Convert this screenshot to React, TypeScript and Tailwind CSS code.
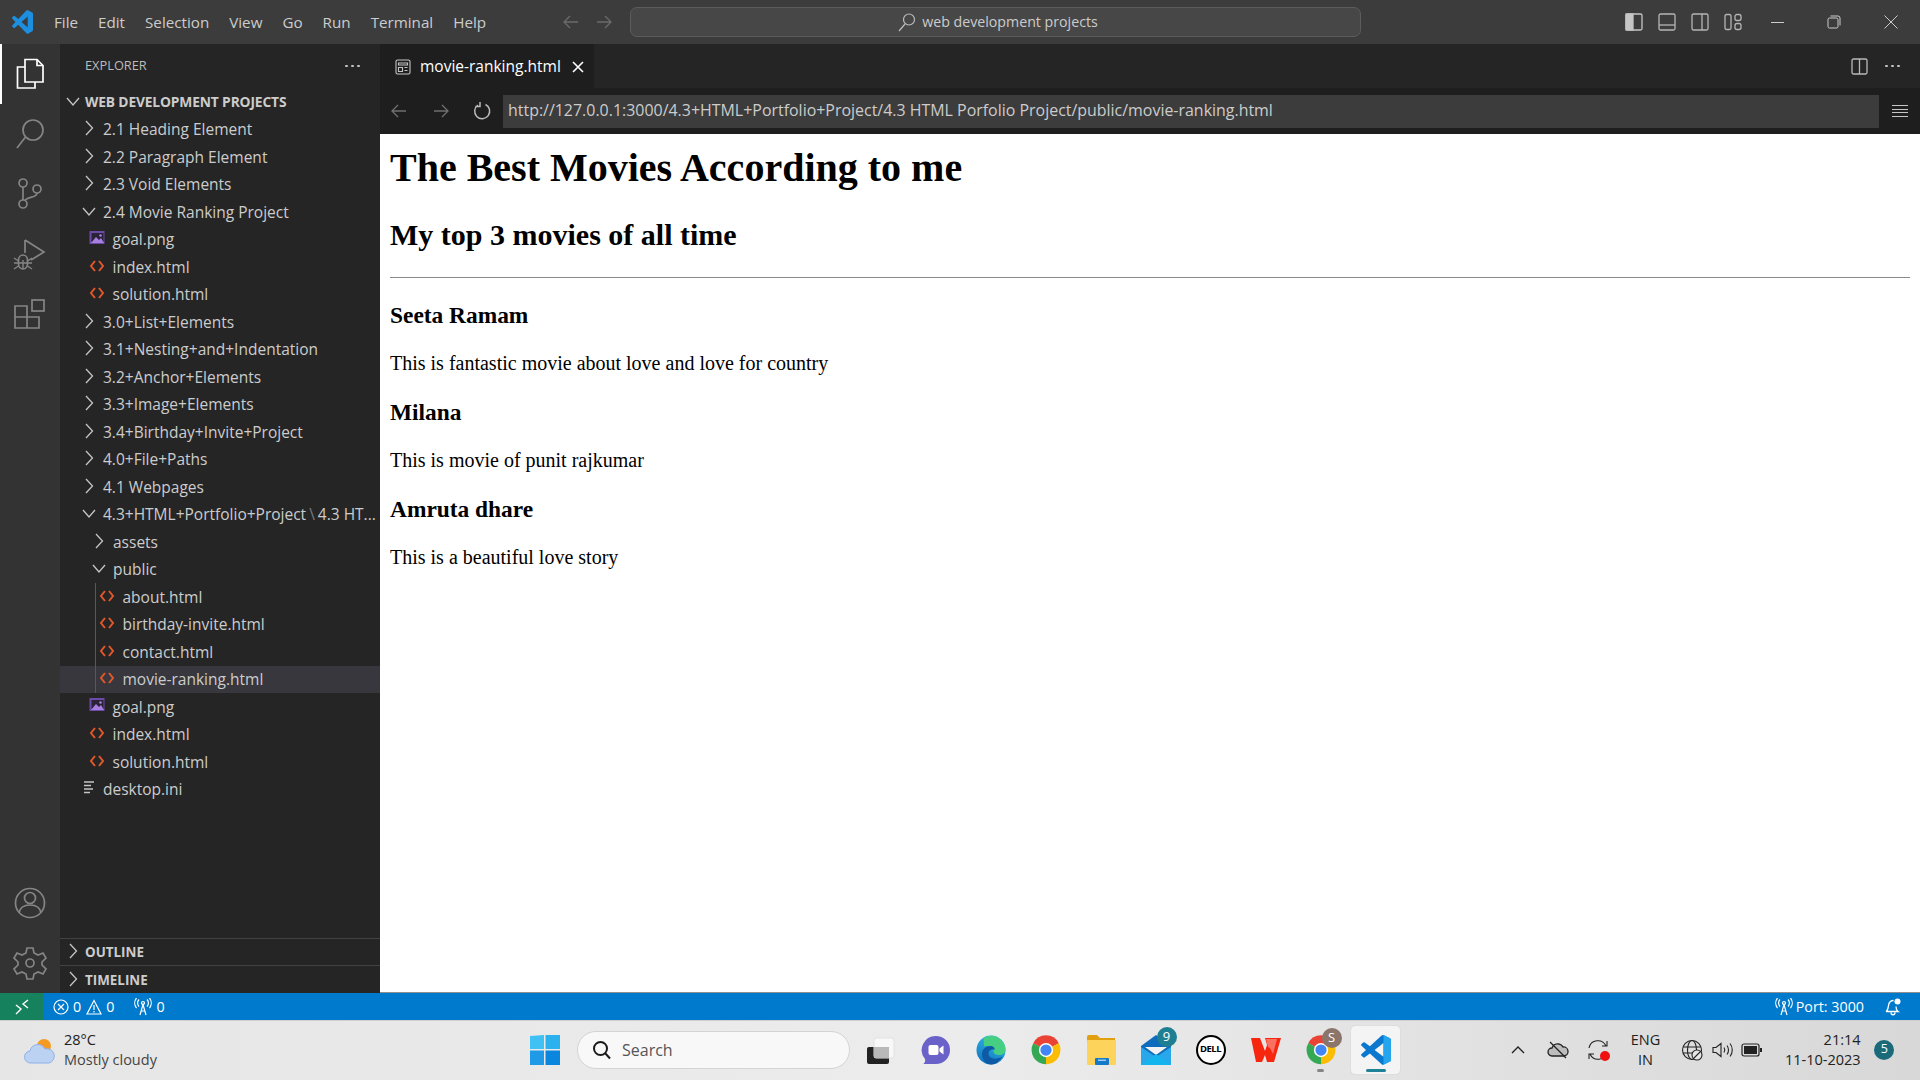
import React from "react";

const UI = "font-['Open_Sans','Noto_Sans',sans-serif]";

const VSCODE_PATH =
  "M96.46 10.8 75.86.87a6.23 6.23 0 0 0-7.1 1.21L29.66 37.8 12.62 24.87a4.16 4.16 0 0 0-5.32.24L1.86 30.06a4.17 4.17 0 0 0 0 6.16L16.64 49.7 1.86 63.18a4.17 4.17 0 0 0 0 6.16l5.44 4.95a4.16 4.16 0 0 0 5.32.24L29.66 61.6l39.1 35.72a6.22 6.22 0 0 0 7.1 1.2l20.6-9.91A6.25 6.25 0 0 0 100 83V16.43a6.25 6.25 0 0 0-3.54-5.63ZM75 72.7 45.33 49.7 75 26.7Z";

function VsLogo({ size }: { size: number }) {
  return (
    <svg width={size} height={size} viewBox="0 0 100 100">
      <path d={VSCODE_PATH} fill="#0a78cf" />
      <path d="M75 72.7V26.7L75 0.3 96.46 10.8A6.25 6.25 0 0 1 100 16.43V83a6.25 6.25 0 0 1-3.54 5.61L75 99.1Z" fill="#26a5ef" />
    </svg>
  );
}

function Arrow({ dir, color }: { dir: "l" | "r"; color: string }) {
  return (
    <svg width="18" height="18" viewBox="0 0 18 18" fill="none" stroke={color} strokeWidth="1.3">
      {dir === "l" ? <path d="M16 9H2M8 3 2 9l6 6" /> : <path d="M2 9h14M10 3l6 6-6 6" />}
    </svg>
  );
}

function Chevron({ open }: { open?: boolean }) {
  return (
    <svg width="20" height="20" viewBox="0 0 20 20" fill="none" stroke="#c5c5c5" strokeWidth="1.3" className="-mt-[3px] shrink-0">
      {open ? <path d="M4 7l6 7 6-7" /> : <path d="M7 3l6.5 7L7 17" />}
    </svg>
  );
}

function HtmlIcon() {
  return (
    <svg width="20" height="14" viewBox="0 0 20 14" fill="none" stroke="#e2582b" strokeWidth="2" className="-mt-[3px] shrink-0">
      <path d="M8 2 4 7l4 5M12 2l4 5-4 5" />
    </svg>
  );
}

function ImageIcon() {
  return (
    <svg width="20" height="16" viewBox="0 0 20 16" className="-mt-[4px] shrink-0">
      <rect x="2.5" y="1" width="15" height="13" fill="#6b4aa8" />
      <rect x="4.5" y="3" width="12" height="9" fill="#2a2338" />
      <path d="M4 13l5-6 3 3 2-2 3 5z" fill="#a77fe0" />
      <circle cx="13.5" cy="5.5" r="1.3" fill="#a77fe0" />
    </svg>
  );
}

function LinesIcon() {
  return (
    <svg width="20" height="16" viewBox="0 0 20 16" stroke="#c5c5c5" strokeWidth="1.4" className="-mt-[4px] shrink-0">
      <path d="M5 2h10M5 5.5h7M5 9h9M5 12.5h6" />
    </svg>
  );
}

type Item = { label: React.ReactNode; id?: string; kind: "closed" | "open" | "html" | "img" | "ini"; level: 1 | 2 | 3; selected?: boolean };

const padClass: Record<string, string> = {
  "1chev": "pl-[19px] gap-[4px]",
  "2chev": "pl-[29px] gap-[4px]",
  "2file": "pl-[27px] gap-[5.5px]",
  "3file": "pl-[37px] gap-[5.5px]",
  "1file": "pl-[19px] gap-[4px]",
};

function Row({ label, kind, level, selected }: Item) {
  const isFolder = kind === "closed" || kind === "open";
  const key = `${level}${isFolder ? "chev" : "file"}`;
  return (
    <div className={`flex h-[27.5px] items-center pt-[1px] text-[15.5px] text-[#cccccc] whitespace-nowrap overflow-hidden ${padClass[key]} ${selected ? "bg-[#37373d]" : ""}`}>
      {kind === "closed" && <Chevron />}
      {kind === "open" && <Chevron open />}
      {kind === "html" && <HtmlIcon />}
      {kind === "img" && <ImageIcon />}
      {kind === "ini" && <LinesIcon />}
      <span>{label}</span>
    </div>
  );
}

const treeA: Item[] = [
  { label: "2.1 Heading Element", kind: "closed", level: 1 },
  { label: "2.2 Paragraph Element", kind: "closed", level: 1 },
  { label: "2.3 Void Elements", kind: "closed", level: 1 },
  { label: "2.4 Movie Ranking Project", kind: "open", level: 1 },
  { label: "goal.png", kind: "img", level: 2 },
  { label: "index.html", kind: "html", level: 2 },
  { label: "solution.html", kind: "html", level: 2 },
  { label: "3.0+List+Elements", kind: "closed", level: 1 },
  { label: "3.1+Nesting+and+Indentation", kind: "closed", level: 1 },
  { label: "3.2+Anchor+Elements", kind: "closed", level: 1 },
  { label: "3.3+Image+Elements", kind: "closed", level: 1 },
  { label: "3.4+Birthday+Invite+Project", kind: "closed", level: 1 },
  { label: "4.0+File+Paths", kind: "closed", level: 1 },
  { label: "4.1 Webpages", kind: "closed", level: 1 },
];
const treeB: Item[] = [
  { label: "about.html", kind: "html", level: 3 },
  { label: "birthday-invite.html", kind: "html", level: 3 },
  { label: "contact.html", kind: "html", level: 3 },
  { label: "movie-ranking.html", kind: "html", level: 3, selected: true },
];
const treeC: Item[] = [
  { label: "goal.png", kind: "img", level: 2 },
  { label: "index.html", kind: "html", level: 2 },
  { label: "solution.html", kind: "html", level: 2 },
  { label: "desktop.ini", kind: "ini", level: 1 },
];

function Activity({ active, children }: { active?: boolean; children: React.ReactNode }) {
  return (
    <div className={`flex h-[60px] w-[60px] items-center justify-center ${active ? "border-l-2 border-white pr-[2px]" : ""}`}>
      <svg width="40" height="40" viewBox="0 0 40 40" fill="none" stroke={active ? "#ffffff" : "#858585"} strokeWidth="1.7">
        {children}
      </svg>
    </div>
  );
}

function ActivityBar() {
  return (
    <div className="flex w-[60px] shrink-0 flex-col justify-between bg-[#333333]">
      <div className="flex flex-col">
        <Activity active>
          <path d="M15 5.5h12l6 6V28H15z" />
          <path d="M27 5.5v6h6" />
          <path d="M15 13H7.5v21H25v-6" />
        </Activity>
        <Activity>
          <circle cx="23" cy="16" r="10" />
          <path d="M15.5 23 7 34" />
        </Activity>
        <Activity>
          <circle cx="13" cy="9" r="4" />
          <circle cx="27" cy="15" r="4" />
          <circle cx="13" cy="30" r="4" />
          <path d="M13 13v13M27 19c0 5-8 3-12 7" />
        </Activity>
        <Activity>
          <path d="M15 6l19 12-13 8M15 6v13" />
          <path d="M8.500 26a4.500 5 0 0 1 9 0v4a4.500 5 0 0 1-9 0z" />
          <path d="M8.500 29h9M13 26v9M4 24l4.500 3M22 24l-4.500 3M4 29h4.500M22 29h-4.500M4 35l4.500-3M22 35l-4.500-3" strokeWidth="1.400" />
        </Activity>
        <Activity>
          <path d="M5 12h12v22H5zM5 23h24v11H17M17 23V34" />
          <rect x="22" y="6" width="12" height="11" />
        </Activity>
      </div>
      <div className="flex flex-col">
        <Activity>
          <circle cx="20" cy="20" r="14.5" />
          <circle cx="20" cy="15" r="5.5" />
          <path d="M9 30c1-6 5-8 11-8s10 2 11 8" />
        </Activity>
        <Activity>
          <circle cx="20" cy="20" r="4" />
          <path d="M17 5h6l1 5 4 2 5-2 3 5-4 4v3l4 4-3 5-5-2-4 2-1 5h-6l-1-5-4-2-5 2-3-5 4-4v-3l-4-4 3-5 5 2 4-2z" />
        </Activity>
      </div>
    </div>
  );
}

function Sidebar() {
  return (
    <div className="flex w-[320px] shrink-0 flex-col bg-[#252526]">
      <div className="flex h-[44px] shrink-0 items-center justify-between pl-[25px] pr-[20px] text-[12.8px] text-[#bbbbbb]">
        <span>EXPLORER</span>
        <span className="flex gap-[3px]">
          <i className="h-[2.5px] w-[3px] rounded-full bg-[#c5c5c5]" />
          <i className="h-[2.5px] w-[3px] rounded-full bg-[#c5c5c5]" />
          <i className="h-[2.5px] w-[3px] rounded-full bg-[#c5c5c5]" />
        </span>
      </div>
      <div className="flex h-[27.5px] shrink-0 items-center gap-[2px] pl-[3px] pt-[1px] text-[13.8px] font-bold text-[#cccccc]">
        <Chevron open />
        <span className="tracking-[-0.15px]">WEB DEVELOPMENT PROJECTS</span>
      </div>
      <div className="flex-1">
        {treeA.map((r) => (
          <Row key={String(r.label)} {...r} />
        ))}
        <Row
          label={
            <>
              4.3+HTML+Portfolio+Project
              <span className="mx-[3px] text-[#7a7a7a]">\</span>4.3 HT...
            </>
          }
          kind="open"
          level={1}
        />
        <Row label="assets" kind="closed" level={2} />
        <Row label="public" kind="open" level={2} />
        <div className="relative">
          <i className="absolute bottom-0 left-[35px] top-0 z-10 w-px bg-[#585858]" />
          {treeB.map((r) => (
            <Row key={String(r.label)} {...r} />
          ))}
        </div>
        {treeC.map((r) => (
          <Row key={"c" + String(r.label)} {...r} />
        ))}
      </div>
      <div className="flex h-[27px] items-center gap-[2px] border-t border-[#414141] pl-[3px] text-[13.4px] font-bold text-[#cccccc]">
        <Chevron />
        <span>OUTLINE</span>
      </div>
      <div className="flex h-[28px] items-center gap-[2px] border-t border-[#414141] pl-[3px] pt-[1px] text-[13.4px] font-bold text-[#cccccc]">
        <Chevron />
        <span>TIMELINE</span>
      </div>
    </div>
  );
}

function TitleBar() {
  const menu = ["File", "Edit", "Selection", "View", "Go", "Run", "Terminal", "Help"];
  return (
    <div className="flex h-[44px] shrink-0 items-center bg-[#3c3c3c] text-[15.2px] text-[#cccccc]">
      <div className="flex w-[44px] justify-center">
        <svg width="21" height="24" viewBox="0 0 100 100" preserveAspectRatio="none">
          <path d={VSCODE_PATH} fill="#1c8fe0" />
        </svg>
      </div>
      <div className="flex w-[516px] items-center">
        {menu.map((m) => (
          <span key={m} className="px-[10px]">{m}</span>
        ))}
      </div>
      <div className="flex w-[70px] items-center gap-[15px] pl-[2px]">
        <Arrow dir="l" color="#6b6b6b" />
        <Arrow dir="r" color="#6b6b6b" />
      </div>
      <div className="flex h-[30px] w-[731px] items-center justify-center gap-[5px] rounded-[7px] border border-[#5c5c5c] bg-[#474747] pl-[4px] text-[14.2px]">
        <svg width="20" height="20" viewBox="0 0 20 20" fill="none" stroke="#bcbcbc" strokeWidth="1.2">
          <circle cx="12" cy="7.5" r="5.5" />
          <path d="M8 12l-6 7" />
        </svg>
        <span>web development projects</span>
      </div>
      <div className="flex flex-1 items-center pl-[263.5px]">
        <LayoutIcons />
      </div>
    </div>
  );
}

function LayoutIcons() {
  return (
    <div className="flex items-center text-[#c5c5c5]">
      <div className="flex gap-[15px]">
        <svg width="18" height="18" viewBox="0 0 18 18" fill="none" stroke="#c5c5c5" strokeWidth="1.3">
          <rect x="1" y="1" width="16" height="16" rx="1.5" />
          <rect x="1" y="1" width="7" height="16" fill="#c5c5c5" />
        </svg>
        <svg width="18" height="18" viewBox="0 0 18 18" fill="none" stroke="#b5b5b5" strokeWidth="1.3">
          <rect x="1" y="1" width="16" height="16" rx="1.5" />
          <path d="M1 12h16" />
        </svg>
        <svg width="18" height="18" viewBox="0 0 18 18" fill="none" stroke="#b5b5b5" strokeWidth="1.3">
          <rect x="1" y="1" width="16" height="16" rx="1.5" />
          <path d="M11 1v16" />
        </svg>
        <svg width="18" height="18" viewBox="0 0 18 18" fill="none" stroke="#b5b5b5" strokeWidth="1.3">
          <rect x="1" y="1.5" width="6" height="15" rx="1.5" />
          <rect x="11" y="1.5" width="6" height="6" rx="2" />
          <rect x="11" y="10.5" width="6" height="6" rx="2" />
        </svg>
      </div>
      <div className="ml-[29px] h-px w-[13px] bg-[#cccccc]" />
      <svg width="14" height="14" viewBox="0 0 14 14" fill="none" stroke="#cccccc" className="ml-[43.5px]">
        <rect x="1" y="3" width="10" height="10" rx="1.5" />
        <path d="M3.5 1H11a2 2 0 0 1 2 2v7.5" />
      </svg>
      <svg width="14" height="14" viewBox="0 0 14 14" stroke="#cccccc" className="ml-[42.5px]">
        <path d="M.5.5l13 13M13.5.5l-13 13" />
      </svg>
    </div>
  );
}

function EditorArea() {
  return (
    <div className="flex min-w-0 flex-1 flex-col bg-[#1e1e1e]">
      <div className="flex h-[44px] shrink-0 items-center bg-[#252526]">
        <div className="flex h-full w-[214px] items-center bg-[#1e1e1e] pl-[15px] pt-[1px] text-[15.5px] text-white">
          <svg width="16" height="16" viewBox="0 0 16 16" fill="none" stroke="#c5c5c5" strokeWidth="1.1">
            <rect x="1" y="1" width="14" height="14" rx="1.5" />
            <path d="M3.5 4h9v2h-9zM3.5 8.5h4v4h-4zM9.500 8.500h3M9.500 11.500h3" />
          </svg>
          <span className="ml-[9px]">movie-ranking.html</span>
          <svg width="12" height="12" viewBox="0 0 12 12" stroke="#ffffff" strokeWidth="1.6" className="ml-[11px]">
            <path d="M1 1l10 10M11 1 1 11" />
          </svg>
        </div>
        <div className="ml-auto flex items-center gap-[17px] pr-[20px]">
          <svg width="17" height="17" viewBox="0 0 17 17" fill="none" stroke="#b9b9b9" strokeWidth="1.3">
            <rect x="1" y="1" width="15" height="15" rx="1.5" />
            <path d="M8.5 1v15" />
          </svg>
          <span className="flex gap-[3px]">
            <i className="h-[2.5px] w-[3px] rounded-full bg-[#c5c5c5]" />
            <i className="h-[2.5px] w-[3px] rounded-full bg-[#c5c5c5]" />
            <i className="h-[2.5px] w-[3px] rounded-full bg-[#c5c5c5]" />
          </span>
        </div>
      </div>
      <div className="flex h-[46px] shrink-0 items-center pl-[10px]">
        <div className="flex w-[113px] items-center">
          <span className="w-[42px]"><Arrow dir="l" color="#6f6f6f" /></span>
          <span className="w-[40px]"><Arrow dir="r" color="#6f6f6f" /></span>
          <svg width="20" height="20" viewBox="0 0 20 20" fill="none" stroke="#bbbbbb" strokeWidth="1.5">
            <path d="M6 4a7.500 7.500 0 1 0 7.500-.5" />
            <path d="M8 1v4.500H3.500" />
          </svg>
        </div>
        <div className="flex h-[33px] w-[1376px] items-center bg-[#3c3c3c] pl-[5px] text-[15.95px] text-[#cccccc]">
          http://127.0.0.1:3000/4.3+HTML+Portfolio+Project/4.3 HTML Porfolio Project/public/movie-ranking.html
        </div>
        <div className="flex flex-1 flex-col items-center gap-[2.5px]">
          <i className="h-px w-[16px] bg-[#c5c5c5]" />
          <i className="h-px w-[16px] bg-[#c5c5c5]" />
          <i className="h-px w-[16px] bg-[#c5c5c5]" />
          <i className="h-px w-[16px] bg-[#c5c5c5]" />
        </div>
      </div>
      <div className="min-h-0 flex-1 border-b border-[#8f8f8f] bg-white px-[10px] pt-[11px] font-['Liberation_Serif',serif] text-[20px] leading-[23px] text-black">
        <h1 className="mb-[26.8px] text-[40px] font-bold leading-[46px]">The Best Movies According to me</h1>
        <h2 className="text-[30px] font-bold leading-[34.5px]">My top 3 movies of all time</h2>
        <hr className="mb-[23.9px] mt-[24.9px] h-px border-0 bg-[#8a8a8a]" />
        <h3 className="text-[23.4px] font-bold leading-[27px]">Seeta Ramam</h3>
        <p className="my-[23.4px]">This is fantastic movie about love and love for country</p>
        <h3 className="text-[23.4px] font-bold leading-[27px]">Milana</h3>
        <p className="my-[23.4px]">This is movie of punit rajkumar</p>
        <h3 className="text-[23.4px] font-bold leading-[27px]">Amruta dhare</h3>
        <p className="my-[23.4px]">This is a beautiful love story</p>
      </div>
    </div>
  );
}

function Radio() {
  return (
    <svg width="20" height="18" viewBox="0 0 20 18" fill="none" stroke="#ffffff" strokeWidth="1.2">
      <circle cx="10" cy="5" r="1.5" />
      <path d="M7 17l3-10.5L13 17M8 13h4M6 1.5a5 5 0 0 0 0 7M14 1.5a5 5 0 0 1 0 7M3.5 0a8 8 0 0 0 0 10M16.5 0a8 8 0 0 1 0 10" />
    </svg>
  );
}

function StatusBar() {
  return (
    <div className="flex h-[27px] shrink-0 items-center bg-[#007acc] text-[14.3px] text-white">
      <div className="flex h-full w-[43px] items-center justify-center bg-[#16825d]">
        <svg width="16" height="16" viewBox="0 0 16 16" fill="none" stroke="#ffffff" strokeWidth="1.4">
          <path d="M2 6l5 4-5 5M14 1 9 5l5 4" />
        </svg>
      </div>
      <div className="ml-[10px] flex items-center gap-[4px]">
        <svg width="16" height="16" viewBox="0 0 16 16" fill="none" stroke="#ffffff" strokeWidth="1.2">
          <circle cx="8" cy="8" r="7" />
          <path d="M5 5l6 6M11 5l-6 6" />
        </svg>
        <span>0</span>
        <svg width="16" height="16" viewBox="0 0 16 16" fill="none" stroke="#ffffff" strokeWidth="1.2" className="ml-[1px]">
          <path d="M8 1.5 15 15H1zM8 6v5M8 12v1.500" />
        </svg>
        <span>0</span>
      </div>
      <div className="ml-[19px] flex items-center gap-[3px]">
        <Radio />
        <span>0</span>
      </div>
      <div className="ml-auto flex items-center gap-[2px]">
        <Radio />
        <span>Port: 3000</span>
      </div>
      <svg width="18" height="18" viewBox="0 0 18 18" fill="none" stroke="#ffffff" strokeWidth="1.3" className="ml-[20px] mr-[18px]">
        <path d="M2 13.5c2-1 2-3 2.5-6S6.5 2.5 9.5 2.5M2 13.5h12c-1.5-1-2-3-2-5M7 14.5c0 3 4 3 4 0" />
        <circle cx="13.5" cy="3.5" r="3" fill="#ffffff" stroke="none" />
      </svg>
    </div>
  );
}

function TaskIcon({ active, children }: { active?: boolean; children: React.ReactNode }) {
  return (
    <div className="relative flex h-[48px] w-[55px] items-center justify-center">
      {active && <i className="absolute left-[3px] right-[3px] top-0 h-[48px] rounded-[4px] bg-[#f4f4f4] shadow-[0_0_1px_#b5b5b5]" />}
      <div className="relative flex">{children}</div>
    </div>
  );
}

function ChromeIcon() {
  return (
    <svg width="30" height="30" viewBox="0 0 40 40">
      <path d="M20 20 3 11A19 19 0 0 1 37 11Z" fill="#ea4335" />
      <path d="M20 20 37 11A19 19 0 0 1 20 39Z" fill="#fbbc04" />
      <path d="M20 20 20 39A19 19 0 0 1 3 11Z" fill="#34a853" />
      <circle cx="20" cy="20" r="9.5" fill="#ffffff" />
      <circle cx="20" cy="20" r="7.5" fill="#4285f4" />
    </svg>
  );
}

function Badge({ text, color }: { text: string; color: string }) {
  return (
    <span className={`absolute -right-[6px] -top-[7px] flex h-[20px] w-[20px] items-center justify-center rounded-full text-[13px] text-white ${color}`}>
      {text}
    </span>
  );
}

function Taskbar() {
  return (
    <div className="flex h-[60px] shrink-0 items-center border-t border-[#cfcfcf] bg-gradient-to-r from-[#e6e6e6] via-[#ececec] to-[#d8d8d8] pb-[2px] text-[#222222]">
      <div className="flex w-[530px] items-center pl-[24px]">
        <svg width="32" height="30" viewBox="0 0 32 30">
          <circle cx="20" cy="11" r="7" fill="#f59a23" />
          <path d="M7 28a6 6 0 0 1-1-12 8 8 0 0 1 15-2 6.500 6.500 0 0 1 4 14z" fill="#bcd2f2" stroke="#8fb0e8" strokeWidth="1" />
        </svg>
        <div className="ml-[8px] flex flex-col text-[14.5px] leading-[20px]">
          <span>28°C</span>
          <span className="text-[#444444]">Mostly cloudy</span>
        </div>
      </div>
      <svg width="30" height="30" viewBox="0 0 30 30" className="shrink-0">
        <path d="M0 1l14-1v14H0z" fill="#3fc1f4" />
        <path d="M15.500 0 30 0v14H15.500z" fill="#2ab1ee" />
        <path d="M0 15.500h14V30H0z" fill="#1e9ae6" />
        <path d="M15.500 15.500H30V30H15.500z" fill="#0b86de" />
      </svg>
      <div className="ml-[17px] flex h-[38px] w-[273px] shrink-0 items-center rounded-full border border-[#d4d4d4] bg-[#f8f8f8] pl-[14px] text-[16px] text-[#555555]">
        <svg width="20" height="20" viewBox="0 0 20 20" fill="none" stroke="#1a1a1a" strokeWidth="2">
          <circle cx="8.500" cy="8.500" r="6.500" />
          <path d="M13 13l5 5.500" />
        </svg>
        <span className="ml-[10px]">Search</span>
      </div>
      <div className="ml-[3px] flex items-center">
        <TaskIcon>
          <svg width="30" height="30" viewBox="0 0 30 30">
            <rect x="1" y="12" width="22" height="17" rx="2" fill="#222222" />
            <rect x="8" y="3" width="20" height="20" rx="2" fill="#f8f8f8" stroke="#e1e1e1" />
            <rect x="8" y="12" width="15" height="11" fill="#b9b9b9" />
          </svg>
        </TaskIcon>
        <TaskIcon>
          <svg width="30" height="30" viewBox="0 0 30 30">
            <path d="M15 1a14 14 0 0 1 0 28H2c2-1 2.500-3 2-5A14 14 0 0 1 15 1z" fill="#6a62c9" />
            <rect x="7.500" y="10" width="10" height="10" rx="2" fill="#ffffff" />
            <path d="M18.500 13.500l4-3v9l-4-3z" fill="#ffffff" />
          </svg>
        </TaskIcon>
        <TaskIcon>
          <svg width="30" height="30" viewBox="0 0 30 30">
            <defs>
              <linearGradient id="edgeBase" x1="0" y1="1" x2="0.4" y2="0">
                <stop offset="0" stopColor="#0f6db8" />
                <stop offset="1" stopColor="#2db3e6" />
              </linearGradient>
            </defs>
            <circle cx="15" cy="15" r="14.500" fill="url(#edgeBase)" />
            <path d="M8 3C12 .5 17 0 21 2c5 2.500 8.500 7 8.500 12.500 0 3-2 5.500-6 5.500-3 0-6-1-6-3.500 0-3-3-6-9.500-5.500 0-3 -.5-6 0-8.500z" fill="#46cf83" />
            <path d="M6 19c0-5 4-8 8-8 3.500 0 5 2 4.500 4-1.500-1-6-.5-6 3.500 0 5 7 7 14 3-3 5-7 8-11 8-5.500 0-9.500-5-9.500-10.500z" fill="#0d5aa6" />
          </svg>
        </TaskIcon>
        <TaskIcon><ChromeIcon /></TaskIcon>
        <TaskIcon>
          <svg width="30" height="32" viewBox="0 0 30 32">
            <path d="M1 3a2 2 0 0 1 2-2h8l3 3h15v8H1z" fill="#e0a010" />
            <rect x="1" y="6" width="29" height="25" rx="1" fill="#fdd35c" />
            <rect x="9" y="24" width="14" height="7" rx="1" fill="#1479c9" />
            <rect x="12" y="25.500" width="8" height="1.500" fill="#9ccdf0" />
          </svg>
        </TaskIcon>
        <TaskIcon>
          <svg width="30" height="32" viewBox="0 0 30 32">
            <path d="M0 12 15 1l15 11v19H0z" fill="#0f6cbd" />
            <path d="M4 13h22l-11 8z" fill="#f2f2f2" />
            <path d="M0 13l15 10 15-10v18H0z" fill="#28a8ea" />
            <path d="M0 31 15 20l15 11z" fill="#14b5ef" />
          </svg>
          <Badge text="9" color="bg-[#1f7f92]" />
        </TaskIcon>
        <TaskIcon>
          <div className="flex h-[30px] w-[30px] items-center justify-center rounded-full border-2 border-black bg-white text-[9.5px] font-bold tracking-[-0.5px] text-black">
            DELL
          </div>
        </TaskIcon>
        <TaskIcon>
          <svg width="30" height="26" viewBox="0 0 30 26">
            <path d="M0 1h9l5 13 2-6-2-7h16l-7 24h-7l-2-7-3 7H5z" fill="#f7260f" />
            <path d="M15 2h11l-4 15-3-6-2-1z" fill="#ffffff" opacity="0.35" />
          </svg>
        </TaskIcon>
        <TaskIcon>
          <ChromeIcon />
          <Badge text="S" color="bg-[#8b7469]" />
          <i className="absolute -bottom-[7px] left-[11px] h-[3px] w-[7px] rounded-full bg-[#858585]" />
        </TaskIcon>
        <TaskIcon active>
          <VsLogo size={30} />
          <i className="absolute -bottom-[7px] left-[5px] h-[3px] w-[20px] rounded-full bg-[#1f8296]" />
        </TaskIcon>
      </div>
      <div className="flex flex-1 items-center pl-[107.5px]">
        <svg width="14" height="10" viewBox="0 0 14 10" fill="none" stroke="#222222" strokeWidth="1.4">
          <path d="M1 8l6-6 6 6" />
        </svg>
        <svg width="22" height="18" viewBox="0 0 22 18" fill="none" stroke="#222222" strokeWidth="1.300" className="ml-[22px]">
          <path d="M5 15a4 4 0 0 1 0-8 6 6 0 0 1 11-1 4.500 4.500 0 0 1 1 9z" fill="#bdbdbd" />
          <path d="M3 1l16 16" />
        </svg>
        <div className="relative ml-[18px] h-[22px] w-[22px]">
          <svg width="22" height="22" viewBox="0 0 22 22" fill="none" stroke="#222222" strokeWidth="1.1">
            <path d="M2 9a9 9 0 0 1 17-2M20 2v5h-5M20 13a9 9 0 0 1-17 2M2 20v-5h5" />
          </svg>
          <i className="absolute bottom-[0px] right-[-1px] h-[10px] w-[10px] rounded-full bg-[#f01010]" />
        </div>
        <div className="ml-[12px] flex w-[50px] flex-col items-center text-[14.5px] leading-[20px]">
          <span>ENG</span>
          <span>IN</span>
        </div>
        <svg width="22" height="22" viewBox="0 0 22 22" fill="none" stroke="#222222" strokeWidth="1.1" className="ml-[10.5px]">
          <circle cx="11" cy="11" r="9.500" />
          <ellipse cx="11" cy="11" rx="4.500" ry="9.500" />
          <path d="M2 8h18M2 14h18" />
          <circle cx="16" cy="16" r="5" fill="#e6e6e6" />
          <path d="M13 19l6-6" />
        </svg>
        <svg width="22" height="18" viewBox="0 0 22 18" fill="none" stroke="#222222" strokeWidth="1.100" className="ml-[9.3px]">
          <path d="M1 6.500h3l5-4v13l-5-4H1zM12 6.500c1 1.500 1 3.500 0 5M15 4.500c2 2.500 2 6.500 0 9M18 2.500c3 3.500 3 9.500 0 13" />
        </svg>
        <svg width="22" height="14" viewBox="0 0 22 14" className="ml-[7px]">
          <rect x="1" y="1" width="17" height="12" rx="2" fill="none" stroke="#222222" strokeWidth="1.200" />
          <rect x="3" y="3" width="13" height="8" fill="#222222" />
          <rect x="19" y="5" width="2" height="4" fill="#222222" />
        </svg>
        <div className="ml-[17.300px] flex w-[80px] flex-col items-end whitespace-nowrap text-[14.5px] leading-[20px]">
          <span>21:14</span>
          <span>11-10-2023</span>
        </div>
        <span className="ml-[13.800px] flex h-[20px] w-[20px] items-center justify-center rounded-full bg-[#1a6a7a] text-[12.5px] text-white">5</span>
      </div>
    </div>
  );
}

export default function App() {
  return (
    <div className={`flex h-[1080px] w-[1920px] flex-col overflow-hidden ${UI}`}>
      <TitleBar />
      <div className="flex min-h-0 flex-1">
        <ActivityBar />
        <Sidebar />
        <EditorArea />
      </div>
      <StatusBar />
      <Taskbar />
    </div>
  );
}
